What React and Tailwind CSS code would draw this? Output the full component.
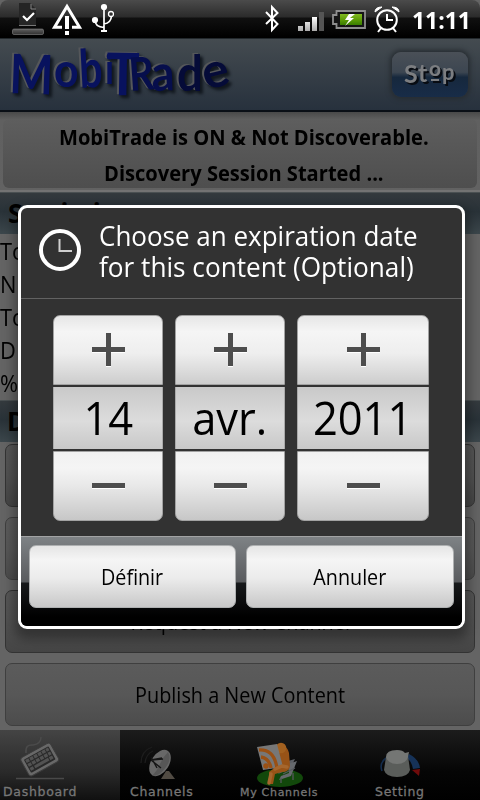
import React from "react";

const sans = "font-['Open_Sans','Noto_Sans',sans-serif]";

function StatusBar() {
  return (
    <header className="flex h-[38px] shrink-0 items-start rounded-t-lg bg-[linear-gradient(#4b4b4b_0px,#2b2b2b_17px,#101010_18px,#000_37px)] text-white">
      <svg className="mt-0.5 ml-3 h-[34px] w-[102px] shrink-0" viewBox="12 2 102 34">
        <defs>
          <linearGradient id="tray" x2="0" y2="1">
            <stop stopColor="#606060" />
            <stop offset="1" stopColor="#303030" />
          </linearGradient>
        </defs>
        <path d="M19 3h11l6 6v16H19z" fill="#252525" />
        <path d="M31 4v5h5" fill="none" stroke="#858585" strokeWidth="1" />
        <path d="M19 25.500h17" stroke="#777" />
        <path d="m23 16 4 4 7-7" fill="none" stroke="#fff" strokeWidth="2.200" />
        <rect x="12.500" y="29" width="31" height="5.500" rx="1.500" fill="url(#tray)" stroke="#8a8a8a" strokeWidth=".6" />
        <path d="M62 27.300H54.500L67 6.500l12.500 20.800H72" fill="none" stroke="#fff" strokeWidth="3" />
        <path d="M67 16v13" stroke="#fff" strokeWidth="4" />
        <path d="M65 31h4v4h-4z" fill="#fff" />
        <path d="M104 6v25M95 20q0 7 9 7.500M104 24q7-1 7.500-8" fill="none" stroke="#fff" strokeWidth="1.700" />
        <path d="M101 30h6v2h-6z" fill="#fff" />
        <circle cx="104" cy="7" r="3.100" fill="#fff" />
        <circle cx="95" cy="20" r="3.100" fill="#fff" />
        <circle cx="111" cy="14" r="2.500" fill="none" stroke="#fff" strokeWidth="1.300" />
      </svg>
      <svg className="mt-0.5 ml-[150px] h-[34px] w-[138px] shrink-0" viewBox="264 2 138 34">
        <defs>
          <linearGradient id="signal" x2="0" y2="1">
            <stop stopColor="#fff" />
            <stop offset="1" stopColor="#ababab" />
          </linearGradient>
          <linearGradient id="charge" x2="0" y2="1">
            <stop stopColor="#81ba21" />
            <stop offset=".5" stopColor="#5f9e08" />
            <stop offset="1" stopColor="#397d00" />
          </linearGradient>
        </defs>
        <path d="m266 12 11.500 12-5.500 6V7l5.500 6L266 24" fill="none" stroke="#fff" strokeWidth="2" />
        <path d="M298 26h5v5h-5zM305 22h5v9h-5zM312 17h5v14h-5z" fill="url(#signal)" />
        <path d="M319 12h5v19h-5z" fill="#555" />
        <path d="M336.500 11h28.500v17h-28.500v-4H333v-9h3.500z" fill="#151515" stroke="#8e8e8e" strokeWidth="1.800" />
        <path d="M340 14h22v11h-22z" fill="url(#charge)" />
        <path d="m349 14-4 6h4l-4 6 9-8h-4l5-4z" fill="#fff" />
        <circle cx="387" cy="20" r="9.800" fill="none" stroke="#fff" strokeWidth="2" />
        <path d="M387 14v6h6M381 28l-3 4M393 28l3 4" fill="none" stroke="#fff" strokeWidth="2" />
        <path d="M375 12q0-5 7-5zM399 12q0-5-7-5z" fill="#fff" stroke="#fff" />
      </svg>
      <span className="ml-[10px] origin-left scale-x-[.955] text-[24px] leading-[39px] font-bold whitespace-nowrap">11:11</span>
    </header>
  );
}

// Wordmark letters: glyph, left edge, baseline, horizontal scale, vertical scale, rotation.
const logo = [
  ["M", 9, 93, 1.1, 1.3, 2],
  ["o", 54, 87, 1.02, 1.15, 0],
  ["b", 80, 88, 0.98, 1.26, -3],
  ["i", 105, 84, 0.85, 0.98, 0],
  ["T", 106, 95, 1.32, 1.4, 1],
  ["R", 130, 91, 0.93, 1.1, -4],
  ["a", 152, 91, 1.08, 1.2, -2],
  ["d", 177, 91, 1.08, 1.2, 0],
  ["e", 206, 90, 1.18, 1.15, -14],
];

function AppHeader() {
  return (
    <div className="flex h-[74px] shrink-0 items-start justify-between border-t border-b-2 border-t-[#22282c] border-b-[#0a0f16] bg-[linear-gradient(#444b50,#27313d)] pr-[12px]">
      <svg
        className="h-[70px] w-[250px] overflow-visible drop-shadow-[3px_3px_1.5px_#11171e]"
        viewBox="0 39 250 70"
        fontFamily="Lato, sans-serif"
        fontWeight="700"
      >
        <g className="drop-shadow-[-1.3px_-1px_0px_#55575a]">
          {logo.map(([ch, x, y, sx, sy, r], i) => (
            <text
              key={i}
              transform={`translate(${x} ${y}) rotate(${r}) scale(${sx} ${sy})`}
              fontSize="42"
              fill={i > 6 ? "#050b38" : i > 4 ? "#060e4c" : "#08125e"}
            >
              {ch}
            </text>
          ))}
        </g>
      </svg>
      <div className="mt-[13px] h-[45px] w-[76px] rounded-[9px] bg-[linear-gradient(#4a5057_0%,#3c4651_45%,#16283d_56%,#182c48_100%)] shadow-[0_0_5px_2px_#262c31]">
        <svg
          className="h-[45px] w-[76px] overflow-visible drop-shadow-[2px_2px_0px_#080c12]"
          viewBox="392 52 76 45"
          fontFamily="Lato, sans-serif"
          fontWeight="700"
          fill="#7c7e81"
        >
          <text x="404" y="83" fontSize="25">S</text>
          <text x="418" y="82" fontSize="25">t</text>
          <text x="429" y="76" fontSize="21">o</text>
          <text x="442" y="80" fontSize="22">p</text>
          <path d="M431 79h8v2h-8z" />
        </svg>
      </div>
    </div>
  );
}

function Section({ children, indent }) {
  return (
    <h2
      className={
        "h-[42px] shrink-0 border-t border-[#4a5052] bg-[linear-gradient(#343a3e,#293238_45%,#3c474c)] text-[26px] leading-[41px] font-bold text-black " +
        (indent ? "pl-2" : "pl-[7px]")
      }
    >
      {children}
    </h2>
  );
}

function PageButton({ children, dark }) {
  return (
    <div
      className={
        "flex h-[63px] shrink-0 items-center justify-center rounded-[7px] border pt-0.5 text-[21px] text-black " +
        (dark
          ? "border-[#333] bg-[linear-gradient(#565656,#515151_50%,#454545)]"
          : "border-[#3f3f3f] bg-[linear-gradient(#5b5b5b,#575757_50%,#4c4c4c)]")
      }
    >
      <span className="scale-x-[.945] whitespace-nowrap">{children}</span>
    </div>
  );
}

function Keyboard() {
  return (
    <svg className="h-[50px] w-[50px]" viewBox="15 732 50 50">
      <path d="M26 753q-1-9 7-8 8-1 8-8" fill="none" stroke="#4b4b4b" strokeWidth="1.500" />
      <path d="M16 778.500h48" stroke="#494949" strokeWidth="1.500" />
      <g transform="rotate(-29 40 760)">
        <rect x="23" y="749" width="34" height="21" rx="3" fill="#686868" stroke="#3c3c3c" />
        <rect x="26" y="752" width="28" height="15" rx="1" fill="#292929" />
        <path d="M27 754.500h26M27 759h26M27 763.500h4M49 763.500h4" stroke="#525252" strokeWidth="3.300" strokeDasharray="3.700 .9" />
        <path d="M32 763.500h16" stroke="#525252" strokeWidth="3" />
      </g>
    </svg>
  );
}

function Dish() {
  return (
    <svg className="h-[50px] w-[50px]" viewBox="135 732 50 50">
      <path d="M141 763q0-12 11-16M145 763q1-9 8-12" fill="none" stroke="#1d1d1d" strokeWidth="1.300" />
      <path d="m161 779 5-8h3l6 8z" fill="#514b43" />
      <ellipse cx="160" cy="763" rx="9" ry="14.500" transform="rotate(32 160 763)" fill="#686868" />
      <path d="M168 752q4 7-2 15-6 9-14 9 5-5 8-12t8-12z" fill="#505050" opacity=".7" />
      <path d="m151 760 11-2M151 760l10 8M151 760l12-1M151 757l6 11" stroke="#161616" strokeWidth="1.400" />
    </svg>
  );
}

function Reader() {
  return (
    <svg className="h-[56px] w-[50px]" viewBox="255 732 50 56">
      <ellipse cx="280" cy="778" rx="23" ry="9" fill="#12480b" />
      <path d="m278 774 12-5 5-10-7 2" fill="#5c5f65" />
      <path d="m288 764 9-3-6 15-12 4 2-4 8-3z" fill="#66696d" />
      <path d="M293 773v7M281 778v5M295 768l-12 6" stroke="#55585c" strokeWidth="1.300" />
      <path d="M279 747q8-3 10 6l1 13q-1 6-8 6l-7 2-2 10h-4v-12l8-6z" fill="#985317" />
      <circle cx="281" cy="748" r="5.300" fill="#a2601f" />
      <path d="m257 747 20-3 6 23-20 3z" fill="#777" />
      <path d="M259 750q15-1 18 18M261 757q8 1 10 11" fill="none" stroke="#9a5014" strokeWidth="3.300" />
      <circle cx="266" cy="766" r="2.800" fill="#9a5014" />
      <path d="m275 769 7-3 5 1M271 774l-2 9" fill="none" stroke="#a5662d" strokeWidth="3.500" strokeLinecap="round" />
    </svg>
  );
}

function Knob() {
  return (
    <svg className="h-[50px] w-[50px]" viewBox="375 732 50 50">
      <path d="M382 771q-3-8 4-13" fill="none" stroke="#132b4b" strokeWidth="1.600" />
      <path d="M409 754q10 5 11 14l-7 1q-1-7-6-11z" fill="#163258" />
      <path d="m412 770 8-1-1 7z" fill="#700b0b" />
      <path d="m386 757-2 13q2 7 13 7t13-7l-2-14z" fill="#5a5d5a" />
      <path d="M386 757q0-7 11-7 6 0 8 3l4-1-1 5q-2 7-11 7t-11-7z" fill="#747674" />
    </svg>
  );
}

function Tab({ icon, label, active, small }) {
  return (
    <div
      className={
        "h-[70px] w-[120px] shrink-0 " +
        (active ? "bg-[linear-gradient(#444,#2a2a2a_60%,#101010)]" : "bg-[linear-gradient(#1c1c1c,#050505_60%,#000)]")
      }
    >
      <div className="h-[54px] pt-0.5 pl-[15px]">{icon}</div>
      <div
        className={
          "font-['DejaVu_Sans'] whitespace-nowrap text-[#777] [-webkit-text-stroke:0.3px_#777] " +
          (small
            ? "text-[11px] leading-[17px] tracking-[.7px]"
            : "text-[12.5px] leading-4 tracking-[.7px]")
        }
      >
        {label}
      </div>
    </div>
  );
}

function Picker({ value, wide }) {
  const edge = "border border-[#a2a2a2]";
  return (
    <div className={"flex shrink-0 flex-col " + (wide ? "w-[132px]" : "w-[110px]")}>
      <div className={"flex h-[70px] items-center justify-center rounded-t-[7px] bg-[linear-gradient(#e6e6e6,#f5f5f5_23%,#eee_55%,#cdcdcd)] pb-px " + edge}>
        <svg className="h-[34px] w-[33px]" viewBox="0 0 33 34">
          <path d="M0 19h33v1H0zM14 33h5v1h-5z" fill="#fff" />
          <path d="M14 0h5v14h14v5H19v14h-5V19H0v-5h14z" fill="#4d4d4d" />
        </svg>
      </div>
      <div className="mt-0.5 flex h-[62px] items-center justify-center border-x border-[#aaa] bg-[linear-gradient(#c9c9c9,#dcdcdc_55%,#c8c8c8)] pb-0.5 text-[46px] leading-[60px] text-black">
        <span className="scale-x-[.945] whitespace-nowrap">{value}</span>
      </div>
      <div className={"mt-0.5 flex h-[70px] items-center justify-center rounded-b-[7px] bg-[linear-gradient(#f1f1f1,#f5f5f5_23%,#e8e8e8_50%,#c7c7c7)] pb-0.5 " + edge}>
        <div className="h-[5px] w-[33px] bg-[#4d4d4d] shadow-[0_1px_#fff]" />
      </div>
    </div>
  );
}

function DialogButton({ children, first }) {
  return (
    <div
      className={
        "flex h-[63px] items-center justify-center rounded-[7px] border border-[#aeb0b1] bg-[linear-gradient(#e5e5e5,#f5f5f5_23%,#ececec_52%,#c8c8c8)] pt-0.5 text-[21px] text-black " +
        (first ? "w-[207px]" : "w-[208px]")
      }
    >
      <span className="scale-x-[.94] whitespace-nowrap">{children}</span>
    </div>
  );
}

function Dialog() {
  return (
    <div className="absolute top-[205px] left-[18px] flex h-[424px] w-[447px] flex-col overflow-hidden rounded-[9px] border-[3px] border-white bg-[#323232] shadow-[0_6px_12px_4px_rgba(0,0,0,.35)]">
      <div className="flex h-[91px] shrink-0 items-start border-b border-[#626262] pl-[17px] text-white">
        <svg className="mt-5 h-[44px] w-[44px] shrink-0" viewBox="38 228 44 44">
          <circle cx="60" cy="250" r="19" fill="none" stroke="#fff" strokeWidth="4" />
          <path d="M59.500 239v12H72" fill="none" stroke="#d0d0d0" strokeWidth="2" />
        </svg>
        <div className="mt-3 ml-[17px] text-[27px] leading-[31px] whitespace-nowrap">
          <div className="origin-left scale-x-[.963]">Choose an expiration date</div>
          <div className="origin-left scale-x-[.97]">for this content (Optional)</div>
        </div>
      </div>
      <div className="flex h-[237px] shrink-0 gap-3 pt-4 pl-8">
        <Picker value="14" />
        <Picker value="avr." />
        <Picker value="2011" wide />
      </div>
      <div className="flex h-[90px] items-start gap-2.5 border-t border-[#a2a3a4] bg-[linear-gradient(#7e8285_0px,#595b5e_45px,#17191b_46px,#000_80px)] px-2 pt-2">
        <DialogButton first>Définir</DialogButton>
        <DialogButton>Annuler</DialogButton>
      </div>
    </div>
  );
}

export default function App() {
  return (
    <div className="bg-black">
      <main className={"relative flex h-[800px] w-[480px] flex-col overflow-hidden bg-[#646464] " + sans}>
        <StatusBar />
        <AppHeader />
        <div className="h-[80px] shrink-0 border-b-2 border-[#737373] bg-[linear-gradient(#494949,#606060_8px,#626262)] px-[3px] pt-[7px]">
          <div className="h-[69px] rounded-md bg-[linear-gradient(#5e5e5e,#4e4e4e)] text-center text-[21px] leading-9 font-bold text-black">
            <div className="scale-x-[.957] pl-[8px] whitespace-nowrap">MobiTrade is ON &amp; Not Discoverable.</div>
            <div className="scale-x-[.957] pl-[8px] whitespace-nowrap">Discovery Session Started ...</div>
          </div>
        </div>
        <Section indent>Statistics</Section>
        <div className="h-[166px] shrink-0 pt-px text-[23px] leading-[33px] text-black">
          {["To", "N", "To", "D", "%"].map((t, i) => (
            <div key={i} className="origin-left scale-x-[.95]">{t}</div>
          ))}
        </div>
        <Section>D</Section>
        <div className="flex flex-1 flex-col gap-2.5 px-[5px] pt-0.5">
          <PageButton dark />
          <PageButton />
          <PageButton dark>Request a New Channel</PageButton>
          <PageButton>Publish a New Content</PageButton>
        </div>
        <nav className="flex h-[70px] shrink-0">
          <Tab active icon={<Keyboard />} label={<span className="pl-[3px]">Dashboard</span>} />
          <Tab icon={<Dish />} label={<span className="pl-[10px]">Channels</span>} />
          <Tab small icon={<Reader />} label={<span className="pl-0">My Channels</span>} />
          <Tab icon={<Knob />} label={<span className="pl-[15px]">Setting</span>} />
        </nav>
        <Dialog />
      </main>
    </div>
  );
}
